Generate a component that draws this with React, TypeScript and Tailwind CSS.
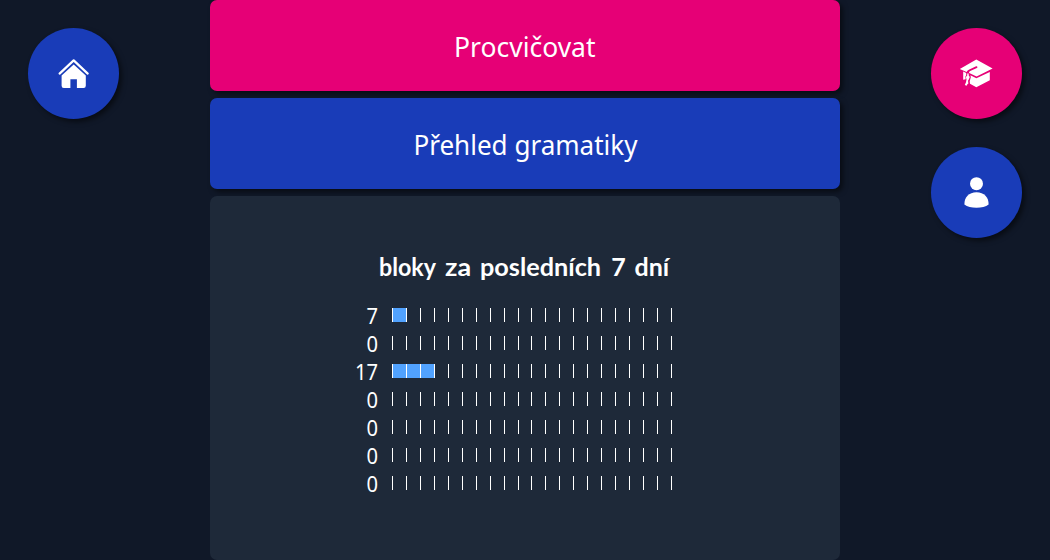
import type { ReactNode } from 'react';

const days = [
  { count: 7, blocks: 1 },
  { count: 0, blocks: 0 },
  { count: 17, blocks: 3 },
  { count: 0, blocks: 0 },
  { count: 0, blocks: 0 },
  { count: 0, blocks: 0 },
  { count: 0, blocks: 0 },
];

function RoundButton({ label, color, children }: { label: string; color: string; children: ReactNode }) {
  return (
    <button
      aria-label={label}
      className={`flex size-[91px] items-center justify-center rounded-full pr-px pb-px text-white shadow-[3px_3px_5px_rgba(0,0,0,0.5)] ${color}`}
    >
      {children}
    </button>
  );
}

function HomeIcon() {
  return (
    <svg viewBox="-0.4 -0.4 32 32" className="size-8 overflow-visible" fill="currentColor">
      <path d="M2.2 16.2 16.3 3 30.3 16.2" fill="none" stroke="currentColor" strokeWidth="2.2" strokeLinecap="round" strokeLinejoin="round" />
      <path d="M16.3 7 28.4 18.2V28.4a2.2 2.2 0 0 1-2.2 2.2H19.5V21.8H13V30.6H6.4A2.2 2.2 0 0 1 4.2 28.4V18.2Z" />
    </svg>
  );
}

function CapIcon() {
  return (
    <svg viewBox="0 0 34 34" className="size-[34px]" fill="currentColor">
      <path d="M17.3 3.5 33.6 12.5 17.6 20.4 10.2 17.1C9.9 16.2 10.2 15.6 11.2 15.1L17.9 12A.9.9 0 0 0 17.1 10.3L9.8 13.7C8.7 14.2 8 14.9 7.6 15.9L.8 13Z" />
      <path d="M11.4 19.2 17.4 22.3 30.8 15.9V24.3L17.3 31.3 11 27.8 10.7 25.2 11.8 21.3Z" />
      <path d="M4.2 15.6 7.2 17V19.2L6.4 20.5 6.7 23.2 4.2 23.7Z" />
      <path d="M8.2 17.6H9.7V19.6L10.8 20.9 9.9 23.2 9 24.8 9.4 27.4 8.4 28.2 7.6 29.8 5.8 28.9 7 26.2 7.5 23.6 6.9 20.9 8.2 19.5Z" />
    </svg>
  );
}

function PersonIcon() {
  return (
    <svg viewBox="-0.5 -0.5 32 32" className="size-8 overflow-visible" fill="currentColor">
      <circle cx="16" cy="7.2" r="6.5" />
      <path d="M3.9 28C3.7 21 8.4 15.8 16 15.8S28.3 21 28.1 28C25.3 30.2 21 31.3 16 31.3S6.7 30.2 3.9 28Z" />
    </svg>
  );
}

function DayRow({ count, blocks }: { count: number; blocks: number }) {
  return (
    <div className="flex h-7 items-start">
      <div className="-mt-[6px] mr-[14px] w-[28px] origin-right scale-x-[0.96] text-right text-[21px] leading-[28px]">{count}</div>
      <div className="grid h-[14px] w-[280px] grid-cols-20 border-r border-white">
        {Array.from({ length: 20 }, (_, i) => (
          <div key={i} className={i < blocks ? 'border-l border-white bg-[#51a2ff]' : 'border-l border-white'} />
        ))}
      </div>
    </div>
  );
}

export default function App() {
  return (
    <div className="flex h-[560px] w-[1050px] justify-between overflow-hidden bg-[#101828] font-['Noto_Sans',sans-serif] text-white">
      <nav className="w-[210px] p-7">
        <RoundButton label="Domů" color="bg-[#193cb8]">
          <HomeIcon />
        </RoundButton>
      </nav>
      <main className="flex w-[630px] flex-col gap-[7px]">
        <button className="flex h-[91px] shrink-0 items-center justify-center rounded-[7px] bg-[#e60076] pt-px text-[28px] shadow-[3px_3px_5px_rgba(0,0,0,0.5)]">
          <span className="origin-center scale-x-[0.945]">Procvičovat</span>
        </button>
        <button className="flex h-[91px] shrink-0 items-center justify-center rounded-[7px] bg-[#193cb8] pt-px text-[28px] shadow-[3px_3px_5px_rgba(0,0,0,0.5)]">
          <span className="origin-center scale-x-[0.93]">Přehled gramatiky</span>
        </button>
        <section className="flex flex-1 flex-col items-center rounded-[7px] bg-[#1e2939] pt-[49px]">
          <h2 className="flex h-[63px] w-[293px] justify-between whitespace-nowrap font-['Lato',sans-serif] text-[25px] leading-[42px] font-bold">
            <span className="w-[58px] origin-left scale-x-[0.93]">bloky</span>
            <span className="w-[27px] origin-left scale-x-[1.08]">za</span>
            <span className="w-[123px] origin-left scale-x-[1.01]">posledních</span>
            <span className="w-[15px]">7</span>
            <span className="w-[37px]">dní</span>
          </h2>
          <div className="w-[350px]">
            {days.map((day, i) => (
              <DayRow key={i} {...day} />
            ))}
          </div>
        </section>
      </main>
      <nav className="flex w-[210px] flex-col items-end gap-7 p-7">
        <RoundButton label="Gramatika" color="bg-[#e60076]">
          <CapIcon />
        </RoundButton>
        <RoundButton label="Profil" color="bg-[#193cb8]">
          <PersonIcon />
        </RoundButton>
      </nav>
    </div>
  );
}
